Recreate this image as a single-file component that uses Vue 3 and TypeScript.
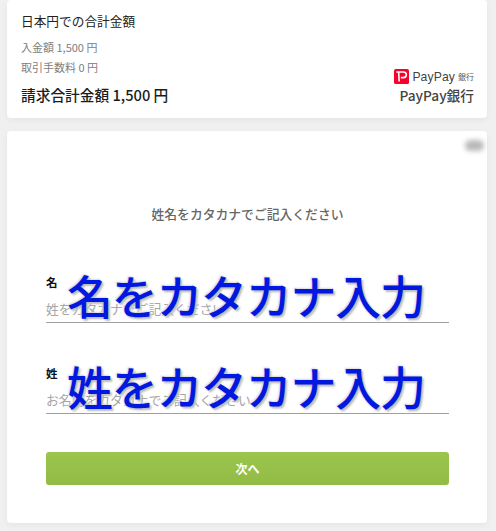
<script setup lang="ts">
interface Field { label: string; placeholder: string; note: string }
const fields: Field[] = [
  { label: '名', placeholder: '姓をカタカナでご記入ください', note: '名をカタカナ入力' },
  { label: '姓', placeholder: 'お名前をカタカナでご記入ください', note: '姓をカタカナ入力' },
]
</script>

<template>
  <div class="page">
    <section class="card summary">
      <div class="summary-left">
        <h2 class="summary-title">日本円での合計金額</h2>
        <p class="line first">入金額 1,500 円</p>
        <p class="line">取引手数料 0 円</p>
        <p class="total">請求合計金額 1,500 円</p>
      </div>
      <div class="summary-right">
        <div class="logo">
          <svg class="logo-mark" width="15" height="15" viewBox="0 0 16 16" aria-hidden="true">
            <rect width="16" height="16" rx="2" fill="#f6002c" />
            <path d="M2.4 3.2h7.4c2 0 3.4 1.2 3.4 3s-1.4 3-3.4 3H7.3M5 3.4 5.5 13.4" fill="none" stroke="#fff" stroke-width="1.7" />
          </svg>
          <span class="logo-word">PayPay</span>
          <span class="logo-bank">銀行</span>
        </div>
        <div class="bank-name">PayPay銀行</div>
      </div>
    </section>

    <section class="card form">
      <div class="blur-mark"></div>
      <h1 class="form-title">姓名をカタカナでご記入ください</h1>
      <div class="fields">
        <div v-for="field in fields" :key="field.label" class="field">
          <label class="field-label">{{ field.label }}</label>
          <div class="field-input">{{ field.placeholder }}</div>
          <span class="note">{{ field.note }}</span>
        </div>
      </div>
      <button class="next" type="button">次へ</button>
    </section>
  </div>
</template>

<style>
html, body { margin: 0; background: #f0f0f0; }
</style>

<style scoped>
.page {
  width: 496px;
  height: 531px;
  box-sizing: border-box;
  padding: 0 9px 0 7px;
  display: flex;
  flex-direction: column;
  gap: 13px;
  overflow: hidden;
  background: #f0f0f0;
  font-family: "Noto Sans CJK JP", "Noto Sans", sans-serif;
}
.card {
  background: #fff;
  border-radius: 4px;
  box-shadow: 0 2px 6px rgba(0, 0, 0, 0.05);
}
.summary {
  height: 118px;
  box-sizing: border-box;
  padding: 10px 13px 13px 14px;
  display: flex;
  justify-content: space-between;
  align-items: flex-end;
  flex: none;
}
.summary-title {
  margin: 0 0 8px;
  font-size: 12.7px;
  line-height: 17px;
  font-weight: 400;
  color: #222;
}
.line {
  margin: 0;
  font-size: 11px;
  line-height: 20px;
  color: #808080;
}
.total {
  margin: 8px 0 0;
  font-size: 14.7px;
  line-height: 20px;
  font-weight: 500;
  color: #1c1c1c;
}
.summary-right {
  display: flex;
  flex-direction: column;
  align-items: flex-end;
  margin-bottom: 1px;
}
.logo {
  display: flex;
  align-items: center;
  height: 15px;
}
.logo-mark { margin-right: 3px; }
.logo-word {
  font-family: "Liberation Sans", sans-serif;
  font-size: 12.2px;
  letter-spacing: 0.1px;
  color: #444;
}
.logo-bank {
  margin-left: 3px;
  font-size: 8px;
  color: #555;
}
.bank-name {
  margin-top: 2px;
  font-size: 13.7px;
  line-height: 18px;
  font-weight: 500;
  color: #444;
}
.form {
  position: relative;
  height: 392px;
  box-sizing: border-box;
  padding: 74px 38px 0 39px;
  flex: none;
}
.blur-mark {
  position: absolute;
  top: 9px;
  right: 3px;
  width: 19px;
  height: 11px;
  border-radius: 6px;
  background: #b9b9b9;
  filter: blur(2.5px);
}
.form-title {
  margin: 0;
  text-align: center;
  font-size: 12.8px;
  line-height: 17px;
  font-weight: 500;
  color: #666;
}
.fields {
  margin-top: 46px;
  display: flex;
  flex-direction: column;
  gap: 35px;
}
.field {
  position: relative;
  height: 56px;
}
.field-label {
  display: block;
  padding-top: 6px;
  font-size: 11.5px;
  line-height: 16px;
  font-weight: 700;
  color: #111;
}
.field-input {
  margin-top: 9px;
  height: 24px;
  line-height: 20px;
  box-sizing: border-box;
  border-bottom: 1px solid #a0a0a0;
  font-size: 12.8px;
  color: #a6a6a6;
}
.note {
  position: absolute;
  left: 21px;
  top: -4px;
  font-size: 46px;
  letter-spacing: -1.3px;
  line-height: 60px;
  font-weight: 500;
  white-space: nowrap;
  color: #0018e0;
  text-shadow: 2px 2px 2px #bcbcbc, -1px -1px 2px #d8d8d8;
}
.next {
  display: block;
  width: 403px;
  height: 33px;
  margin-top: 37px;
  border: none;
  border-radius: 3px;
  background: linear-gradient(#9ac64d, #92bb46);
  color: #fff;
  font-family: inherit;
  font-size: 12px;
  font-weight: 700;
}
</style>
